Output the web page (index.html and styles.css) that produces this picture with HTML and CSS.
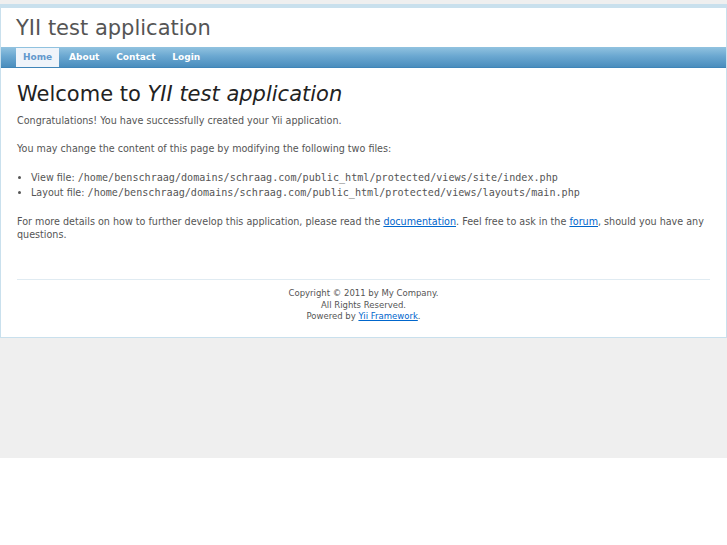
FILE: index.html
```html
<!doctype html>
<html lang="en">
    <head>
        <meta charset="UTF-8" />
        <meta name="viewport" content="width=device-width, initial-scale=1.0" />
        <title>YII test application</title>
        <link rel="stylesheet" href="styles.css">
    </head>
    <body>
        <div class="page">
            <div class="header">
                <div class="logo">YII test application</div>
            </div>

            <div class="mainmenu">
                <ul>
                    <li class="active"><a href="#">Home</a></li>
                    <li><a href="#">About</a></li>
                    <li><a href="#">Contact</a></li>
                    <li><a href="#">Login</a></li>
                </ul>
            </div>

            <div class="content">
                <h1>Welcome to <i>YII test application</i></h1>

                <p>Congratulations! You have successfully created your Yii application.</p>

                <p>You may change the content of this page by modifying the following two files:</p>
                <ul class="files">
                    <li>View file: <tt>/home/benschraag/domains/schraag.com/public_html/protected/views/site/index.php</tt></li>
                    <li>Layout file: <tt>/home/benschraag/domains/schraag.com/public_html/protected/views/layouts/main.php</tt></li>
                </ul>

                <p>For more details on how to further develop this application, please read
                the <a href="#">documentation</a>.
                Feel free to ask in the <a href="#">forum</a>,
                should you have any questions.</p>
            </div>

            <div class="footer">
                Copyright &copy; 2011 by My Company.<br/>
                All Rights Reserved.<br/>
                Powered by <a href="#">Yii Framework</a>.
            </div>
        </div>
    </body>
</html>
```

FILE: styles.css
```css
html {
    background: white;
}
body {
    margin: 0;
    padding: 4px 0 0;
    height: 458px;
    box-sizing: border-box;
    background: #efefef;
    color: #555;
    font: normal 9.6px "DejaVu Sans", Verdana, sans-serif;
}

.page {
    background: white;
    border: 1px solid #c9e0ed;
}

.header {
    border-top: 3px solid #c9e0ed;
}
.logo {
    padding: 7px 15px 6px;
    font-size: 21px;
    line-height: 26px;
    color: #555;
}

.mainmenu {
    height: 20px;
    background: linear-gradient(#92c3e0, #6ba8d1 45%, #4a8dbd);
    border-bottom: 1px solid #3f85b8;
}
.mainmenu ul {
    margin: 0;
    padding: 0 0 0 15px;
    list-style: none;
    font-size: 9px;
    line-height: 19px;
}
.mainmenu li {
    display: inline-block;
}
.mainmenu a {
    display: block;
    margin-top: 1px;
    padding: 0 7px;
    color: white;
    font-weight: bold;
    text-decoration: none;
}
.mainmenu .active a {
    color: #6399cd;
    background: #eff4fa;
}

.content {
    padding: 12px 8px 15px 16px;
}
h1 {
    margin: 0 0 6px;
    font-size: 21px;
    line-height: 28px;
    font-weight: normal;
    color: #222;
}
p {
    margin: 0 0 15px;
    line-height: 13px;
}
.files {
    margin: 0 0 15px;
    padding-left: 14px;
    line-height: 15px;
}
tt {
    font-family: "DejaVu Sans Mono", monospace;
    font-size: 10.1px;
}
a {
    color: #06c;
}

.footer {
    margin: 8px 16px 0;
    padding: 8px 0 14px;
    border-top: 1px solid #e0ebf2;
    text-align: center;
    font-size: 8.5px;
    line-height: 11.5px;
}
```
